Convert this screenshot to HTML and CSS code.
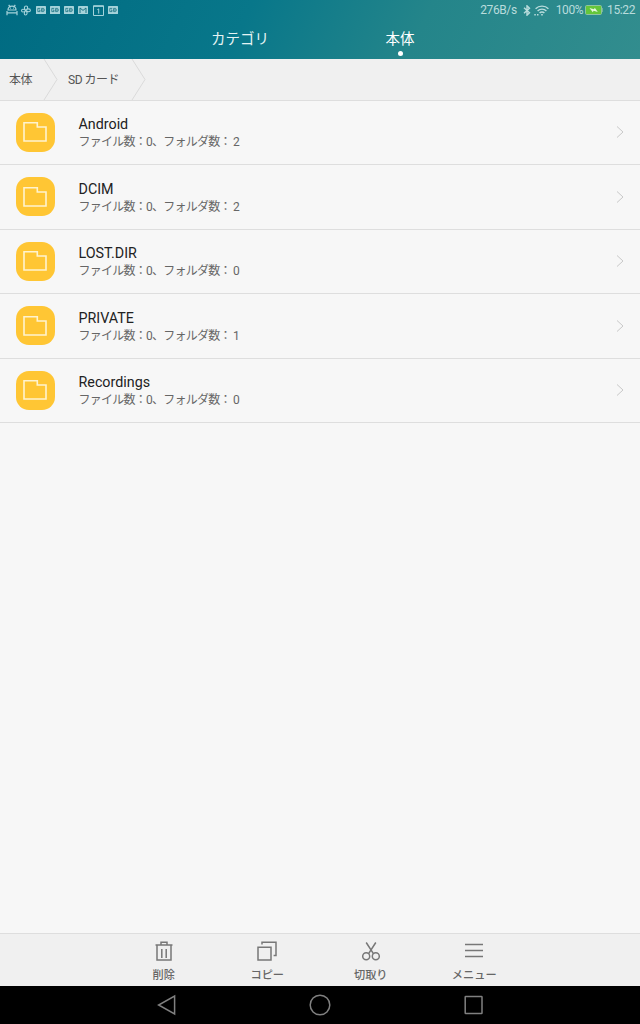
FILE: index.html
```html
<!DOCTYPE html>
<html lang="ja">
<head>
  <meta charset="UTF-8">
  <meta name="viewport" content="width=device-width, initial-scale=1.0">
  <title>ファイル</title>
  <link rel="stylesheet" href="styles.css">
</head>
<body>
  <svg class="defs">
    <symbol id="folder" viewBox="0 0 24 20">
      <path d="M1 0.8H14.3V5H23V19H1Z"/>
    </symbol>
    <symbol id="arrow" viewBox="0 0 8 12">
      <path d="M1 0.5L7 6L1 11.5"/>
    </symbol>
    <symbol id="card" viewBox="0 0 10 8">
      <rect width="10" height="8" rx="0.6" fill="#a5d3da"/>
      <path d="M4.2 2.4H1.8V5.6H4V4.1H3M5.6 2.4H7.6L8.2 3.1V5L7.6 5.6H5.6ZM5.6 4H8" fill="none" stroke="#1c7483" stroke-width="0.8"/>
    </symbol>
  </svg>
  <div class="header">
    <div class="status">
      <div class="notice">
        <svg width="12" height="12" viewBox="0 0 12 12" fill="none" stroke="#a5d3da" stroke-width="1.2">
          <path d="M2 6C2 0.8 10 0.8 10 6ZM2.7 0.8L3.8 2.4M9.3 0.8L8.2 2.4M1 7V11.2M11 7V11.2M1 8.8H11"/>
          <path d="M4.1 4.2H4.9M7.1 4.2H7.9"/>
        </svg>
        <svg width="10" height="11" viewBox="0 0 11 12" fill="none" stroke="#a5d3da" stroke-width="1.2">
          <path d="M5.2 6C3 4 3.4 1 5.6 1S8 4 5.2 6ZM5.2 6C7 3.4 10.3 3.8 10.3 5.8S7.6 8 5.2 6ZM5.2 6C7.6 8 6.8 11 5 11S3 8.4 5.2 6ZM5.2 6C3 8.6 0.6 7.8 0.6 6S3 4 5.2 6Z"/>
        </svg>
        <svg width="10" height="8"><use href="#card"/></svg>
        <svg width="10" height="8"><use href="#card"/></svg>
        <svg width="10" height="8"><use href="#card"/></svg>
        <svg width="10" height="8" viewBox="0 0 10 8">
          <rect width="10" height="8" rx="0.6" fill="#a5d3da"/>
          <path d="M2 7V2L5 4.4L8 2V7" fill="none" stroke="#1c7483"/>
        </svg>
        <svg width="11" height="11" viewBox="0 0 11 11" fill="none" stroke="#a5d3da">
          <path d="M0.5 0.7H10.5V10.5H0.5ZM0.5 1.4H10.5"/>
          <path d="M4.4 4.6L5.7 3.9V8.6"/>
        </svg>
        <svg width="10" height="8"><use href="#card"/></svg>
      </div>
      <div class="system">
        <span class="speed">276B/s</span>
        <svg class="bluetooth" width="8" height="11" viewBox="0 0 8 11" fill="none" stroke="#b9dcdc" stroke-width="1.4">
          <path d="M1 2.8L6.5 7.8L4 10.2V0.8L6.5 3.2L1 8.2"/>
        </svg>
        <svg class="wifi" width="15" height="11" viewBox="0 0 15 11" fill="none" stroke="#b9dcdc" stroke-width="1.4">
          <path d="M1.6 3.8C5 0.2 11 0.2 14.4 3.8M3.6 5.9C6 3.5 10 3.5 12.4 5.9M5.6 8C7 6.6 9 6.6 10.4 8"/>
          <path d="M7.2 9.8H8.8M0.3 9.8H1.8M3 9.8H4.5" stroke-width="1.5"/>
        </svg>
        <span class="percent">100%</span>
        <svg class="battery" width="18" height="10" viewBox="0 0 18 10">
          <rect x="0.5" y="0.5" width="16" height="9" rx="1.2" fill="#65c63a" stroke="#8fc5a0"/>
          <path d="M17 3V7" stroke="#8fc5a0" stroke-width="1.4"/>
          <path d="M4.5 3L9 4.2L9.8 2.8L12.8 7L8.6 5.8L7.8 7.2Z" fill="#e6f7df"/>
        </svg>
        <span class="clock">15:22</span>
      </div>
    </div>
    <ul class="tabs">
      <li>カテゴリ</li>
      <li class="active">本体</li>
    </ul>
  </div>

  <div class="path">
    <span class="root">本体</span>
    <svg width="15" height="41" viewBox="0 0 15 41"><path d="M1 0L14 20.5L1 41"/></svg>
    <span class="sd">SD カード</span>
    <svg width="15" height="41" viewBox="0 0 15 41"><path d="M1 0L14 20.5L1 41"/></svg>
  </div>

  <ul class="list">
    <li>
      <div class="icon"><svg width="24" height="20"><use href="#folder"/></svg></div>
      <div class="info">
        <div class="name">Android</div>
        <div class="count">ファイル数：0、フォルダ数： 2</div>
      </div>
      <svg class="arrow" width="8" height="12"><use href="#arrow"/></svg>
    </li>
    <li>
      <div class="icon"><svg width="24" height="20"><use href="#folder"/></svg></div>
      <div class="info">
        <div class="name">DCIM</div>
        <div class="count">ファイル数：0、フォルダ数： 2</div>
      </div>
      <svg class="arrow" width="8" height="12"><use href="#arrow"/></svg>
    </li>
    <li>
      <div class="icon"><svg width="24" height="20"><use href="#folder"/></svg></div>
      <div class="info">
        <div class="name">LOST.DIR</div>
        <div class="count">ファイル数：0、フォルダ数： 0</div>
      </div>
      <svg class="arrow" width="8" height="12"><use href="#arrow"/></svg>
    </li>
    <li>
      <div class="icon"><svg width="24" height="20"><use href="#folder"/></svg></div>
      <div class="info">
        <div class="name">PRIVATE</div>
        <div class="count">ファイル数：0、フォルダ数： 1</div>
      </div>
      <svg class="arrow" width="8" height="12"><use href="#arrow"/></svg>
    </li>
    <li>
      <div class="icon"><svg width="24" height="20"><use href="#folder"/></svg></div>
      <div class="info">
        <div class="name">Recordings</div>
        <div class="count">ファイル数：0、フォルダ数： 0</div>
      </div>
      <svg class="arrow" width="8" height="12"><use href="#arrow"/></svg>
    </li>
  </ul>

  <ul class="toolbar">
    <li>
      <svg width="20" height="20" viewBox="0 0 20 20">
        <path d="M1.5 4H18.5M7 4V1.2H13V4M3 4V19H17V4M7.8 8V17M12.2 8V17"/>
      </svg>
      <span>削除</span>
    </li>
    <li>
      <svg width="20" height="20" viewBox="0 0 20 20">
        <path d="M1 6.2H14V19H1ZM5 3.6V1.2H19V14.4H16.6"/>
      </svg>
      <span>コピー</span>
    </li>
    <li>
      <svg width="20" height="20" viewBox="0 0 20 20">
        <path d="M5.2 1.5L12.4 12.6M14.8 1.5L7.6 12.6"/>
        <circle cx="5.2" cy="15.2" r="3.5"/>
        <circle cx="14.8" cy="15.2" r="3.5"/>
      </svg>
      <span>切取り</span>
    </li>
    <li>
      <svg width="20" height="20" viewBox="0 0 20 20">
        <path d="M1 3.5H19M1 9.5H19M1 15.5H19"/>
      </svg>
      <span>メニュー</span>
    </li>
  </ul>

  <div class="nav">
    <svg width="22" height="22" viewBox="0 0 22 22"><path d="M18.6 2V20L2.6 11Z"/></svg>
    <svg width="22" height="22" viewBox="0 0 22 22"><circle cx="11" cy="11" r="9.8"/></svg>
    <svg width="22" height="22" viewBox="0 0 22 22"><rect x="3.2" y="2.5" width="16.8" height="17" rx="0.6"/></svg>
  </div>
</body>
</html>
```
FILE: styles.css
```css
*{
  margin: 0;
  padding: 0;
  box-sizing: border-box;
}
li{
  list-style: none;
}
body{
  display: flex;
  flex-direction: column;
  height: 1024px;
  background-color: #f7f7f7;
  font-family: Roboto, "Noto Sans CJK JP", sans-serif;
  overflow: hidden;
}
svg{
  flex: none;
}
.defs{
  display: none;
}
.header{
  height: 59px;
  flex: none;
  background: linear-gradient(115deg, #006b82 0%, #08778a 38%, #24858a 65%, #328d8e 100%);
}
.status{
  display: flex;
  justify-content: space-between;
  height: 20px;
  padding: 0 5px 0 6px;
}
.notice,.system{
  display: flex;
  align-items: center;
}
.notice{
  gap: 4.3px;
}
.notice svg:first-child{
  margin-right: -1px;
}
.system{
  color: #b9dcdc;
  font-size: 12px;
  letter-spacing: -0.4px;
  line-height: 20px;
}
.bluetooth{
  margin-left: 6px;
}
.wifi{
  margin-left: 3px;
}
.percent{
  margin-left: 7px;
}
.battery{
  margin: 0 4px 0 2px;
}
.tabs{
  display: flex;
  justify-content: center;
  height: 39px;
}
.tabs li{
  display: flex;
  flex-direction: column;
  align-items: center;
  width: 160px;
  padding-top: 9px;
  color: #e4f3f3;
  font-size: 14.5px;
  line-height: 21px;
}
.tabs .active{
  color: #fff;
}
.tabs .active::after{
  content: "";
  width: 5px;
  height: 5px;
  margin-top: 1px;
  border-radius: 50%;
  background-color: #fff;
}
.path{
  display: flex;
  align-items: center;
  flex: none;
  height: 41.5px;
  padding-left: 9px;
  background-color: #f0f0f0;
  border-bottom: 1px solid #dedede;
  color: #555;
  font-size: 12px;
  letter-spacing: -0.5px;
}
.path path{
  fill: none;
  stroke: #dadada;
}
.path span{
  padding-bottom: 1px;
}
.root{
  width: 34px;
}
.sd{
  width: 73px;
  padding-left: 10px;
}
.list{
  flex: 1;
}
.list li{
  display: flex;
  align-items: center;
  height: 64.5px;
  padding: 0 16px;
  border-bottom: 1px solid #dedede;
}
.icon{
  display: flex;
  align-items: center;
  justify-content: center;
  width: 39px;
  height: 39px;
  margin-right: 23.5px;
  padding-right: 1px;
  border-radius: 13px;
  background-color: #ffc634;
}
.icon svg{
  fill: none;
  stroke: #fff3cf;
  stroke-width: 1.6;
}
.info{
  flex: 1;
  padding-top: 3px;
}
.name{
  color: #222;
  font-size: 14.3px;
  line-height: 18px;
}
.count{
  color: #666;
  font-size: 12px;
  letter-spacing: -0.75px;
  line-height: 19px;
}
.arrow{
  fill: none;
  stroke: #c8c8c8;
}
.toolbar{
  display: flex;
  justify-content: center;
  flex: none;
  height: 53px;
  padding-right: 2px;
  background-color: #f0f0f0;
  border-top: 1px solid #dedede;
}
.toolbar li{
  display: flex;
  flex-direction: column;
  align-items: center;
  width: 103.5px;
  padding-top: 7px;
  color: #666;
  font-size: 11.2px;
  font-weight: 500;
  line-height: 16px;
}
.toolbar svg{
  margin-bottom: 7px;
  fill: none;
  stroke: #777;
  stroke-width: 1.5;
}
.nav{
  display: flex;
  align-items: center;
  justify-content: center;
  gap: 131px;
  flex: none;
  height: 38px;
  background-color: #000;
}
.nav svg{
  fill: none;
  stroke: #808080;
  stroke-width: 1.5;
}
```
